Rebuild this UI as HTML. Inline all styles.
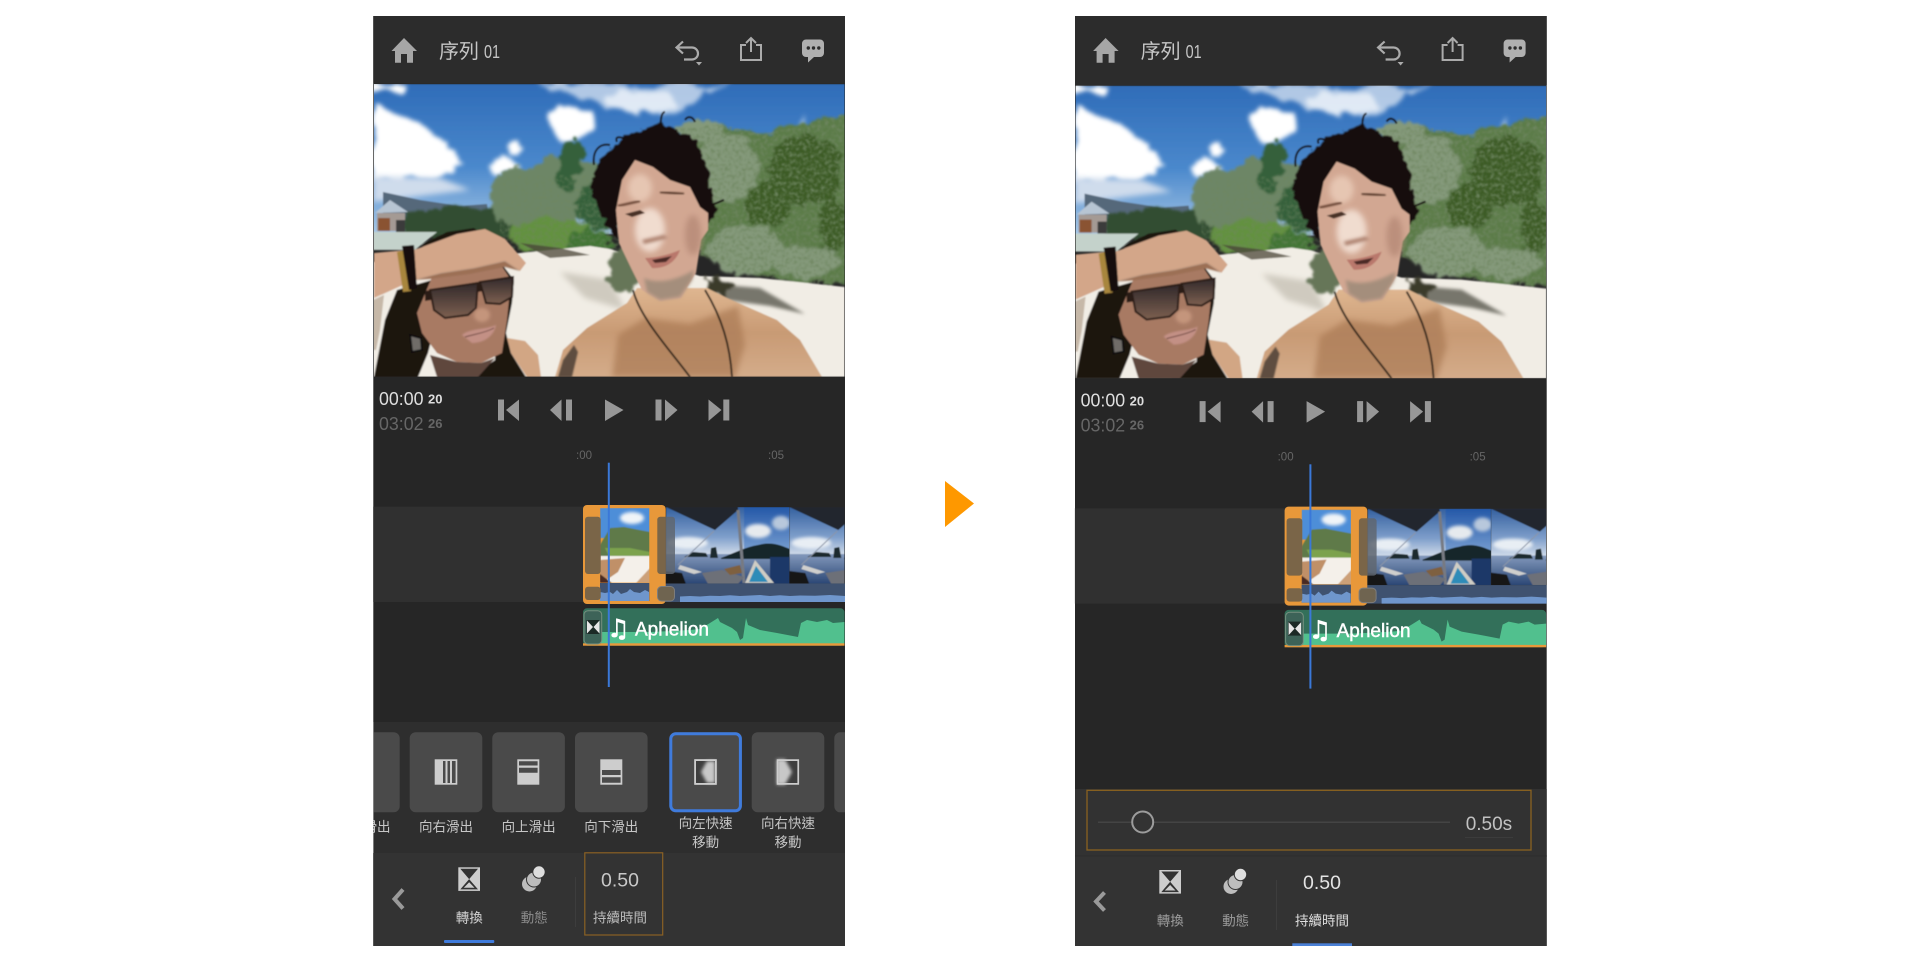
<!DOCTYPE html>
<html lang="zh-Hant"><head><meta charset="utf-8"><title>序列 01</title>
<style>
html,body{margin:0;padding:0;background:#fff;width:1920px;height:963px;overflow:hidden}
svg{display:block}
text{font-family:"Liberation Sans","Noto Sans CJK TC",sans-serif}
.cjk{font-size:13.5px;text-anchor:middle;dominant-baseline:central}
</style></head><body>
<svg width="1920" height="963" viewBox="0 0 1920 963" xmlns="http://www.w3.org/2000/svg">
<defs>
<filter id="b1" x="-5%" y="-5%" width="110%" height="110%"><feGaussianBlur stdDeviation="0.9"/></filter>
<filter id="b3" x="-30%" y="-30%" width="160%" height="160%"><feGaussianBlur stdDeviation="3"/></filter>
<filter id="b2" x="-30%" y="-30%" width="160%" height="160%"><feGaussianBlur stdDeviation="1.600"/></filter>
<filter id="b06" x="-10%" y="-10%" width="120%" height="120%"><feGaussianBlur stdDeviation="0.500"/></filter>
<filter id="cloud" x="-20%" y="-20%" width="140%" height="140%"><feTurbulence type="fractalNoise" baseFrequency=".04" numOctaves="4" seed="3"/><feDisplacementMap in="SourceGraphic" scale="20" xChannelSelector="R" yChannelSelector="G"/><feGaussianBlur stdDeviation="2.200"/></filter>
<filter id="rough" x="-15%" y="-15%" width="130%" height="130%"><feTurbulence type="fractalNoise" baseFrequency=".09" numOctaves="3" seed="8"/><feDisplacementMap in="SourceGraphic" scale="16" xChannelSelector="R" yChannelSelector="G"/><feGaussianBlur stdDeviation="1"/></filter>
<filter id="speck" x="-5%" y="-5%" width="110%" height="110%"><feTurbulence type="fractalNoise" baseFrequency=".28" numOctaves="3" seed="5"/><feColorMatrix type="matrix" values="0 0 0 0 .16  0 0 0 0 .24  0 0 0 0 .12  2.200 0 0 0 -.92"/><feComposite in2="SourceAlpha" operator="in"/></filter>
<filter id="curl" x="-15%" y="-15%" width="130%" height="130%"><feTurbulence type="fractalNoise" baseFrequency=".14" numOctaves="2" seed="2"/><feDisplacementMap in="SourceGraphic" scale="9" xChannelSelector="R" yChannelSelector="G"/><feGaussianBlur stdDeviation=".4"/></filter>
<linearGradient id="sky" x1="0" y1="0" x2="0" y2="1"><stop offset="0" stop-color="#2f6cb8"/><stop offset=".55" stop-color="#4a88cc"/><stop offset="1" stop-color="#a8c8e6"/></linearGradient>
<linearGradient id="skin" x1="0" y1="0" x2="0" y2="1"><stop offset="0" stop-color="#dfb690"/><stop offset=".5" stop-color="#c89a74"/><stop offset="1" stop-color="#d4ac8a"/></linearGradient>
<linearGradient id="lens" x1="0" y1="0" x2="0" y2="1"><stop offset="0" stop-color="#30282a"/><stop offset="1" stop-color="#7d6050"/></linearGradient>
<linearGradient id="tsky" x1="0" y1="0" x2="0" y2="1"><stop offset="0" stop-color="#34609f"/><stop offset=".6" stop-color="#7f9fcb"/><stop offset="1" stop-color="#dce4ee"/></linearGradient>
<linearGradient id="tsky2" x1="0" y1="0" x2="0" y2="1"><stop offset="0" stop-color="#2458a8"/><stop offset="1" stop-color="#7ea4d4"/></linearGradient>
<linearGradient id="twater" x1="0" y1="0" x2="0" y2="1"><stop offset="0" stop-color="#8399bc"/><stop offset="1" stop-color="#2a4674"/></linearGradient>
<clipPath id="cv"><rect x="374" y="84" width="470.5" height="292.7"/></clipPath>
<clipPath id="cth"><rect x="600" y="508" width="49.3" height="74.7"/></clipPath>
<clipPath id="cst"><rect x="665.7" y="507" width="178.8" height="76.5"/></clipPath>
<clipPath id="cth1"><rect x="0" y="0" width="123.3" height="76.5"/></clipPath>

<g id="photo"><g clip-path="url(#cv)"><g filter="url(#b1)">
<rect x="370" y="84" width="480" height="150" fill="url(#sky)"/>
<!-- clouds -->
<g fill="#fff" filter="url(#cloud)">
<path d="M373 105 393 113 417 123 443 143 467 165 450 173 427 180 400 181 373 178Z"/>
<ellipse cx="503" cy="165" rx="14" ry="10"/>
<ellipse cx="572" cy="124" rx="22" ry="17"/>
<ellipse cx="517" cy="148" rx="6" ry="4"/>
<path d="M373 85H403L402 93 385 90 373 88Z"/>
<path d="M536 84H705L697 102 665 114 630 112 600 104 570 94Z" opacity=".62"/>
<ellipse cx="640" cy="100" rx="34" ry="12" opacity=".6"/>
<path d="M700 84H735L715 90Z" opacity=".7"/>
<path d="M795 135 806 114 802 138Z" opacity=".6"/>
</g>
<path d="M373 176 440 178 470 190 373 202Z" fill="#cfdcec" filter="url(#b3)"/>
<!-- far land -->
<path d="M383 192 420 200 460 206 487 204 490 225H383Z" fill="#55687a"/>
<g filter="url(#rough)"><path d="M403 214 440 207 480 208 517 205 520 235 403 238Z" fill="#324e30"/>
<g fill="#6d8666"><ellipse cx="518" cy="198" rx="28" ry="30"/><ellipse cx="555" cy="195" rx="30" ry="40"/><ellipse cx="587" cy="190" rx="22" ry="30"/></g>
<g fill="#36603a"><ellipse cx="572" cy="158" rx="12" ry="18"/><ellipse cx="565" cy="178" rx="10" ry="14"/><ellipse cx="600" cy="205" rx="24" ry="24"/></g>
<ellipse cx="552" cy="236" rx="44" ry="17" fill="#64913f"/>
<ellipse cx="590" cy="242" rx="22" ry="13" fill="#437434"/>
</g>
<!-- right trees -->
<g filter="url(#rough)">
<path d="M680 128 720 124 760 134 800 126 850 112V285L800 283 740 272 700 255Z" fill="#5c7c48"/>
<g fill="#84997a"><ellipse cx="725" cy="168" rx="34" ry="34"/><ellipse cx="745" cy="250" rx="38" ry="24"/><ellipse cx="805" cy="262" rx="32" ry="16"/><ellipse cx="700" cy="130" rx="24" ry="10"/></g>
<g fill="#3c5c26"><ellipse cx="805" cy="170" rx="38" ry="36"/><ellipse cx="770" cy="205" rx="24" ry="22"/><ellipse cx="833" cy="225" rx="14" ry="28"/></g>
</g>
<path d="M680 128 720 124 760 134 800 126 850 112V285L800 283 740 272 700 255Z" fill="#000" filter="url(#speck)"/>
<path d="M500 175H620V250H500Z" fill="#000" filter="url(#speck)" opacity=".6"/>
<!-- sand -->
<path d="M373 262 500 255 590 246 610 249 640 258 700 276 760 278 845 287V377H373Z" fill="#f1ede5"/>
<path d="M712 284 760 288 805 314 770 306 725 300Z" fill="#77766c" filter="url(#b2)"/>
<path d="M560 272 610 280 625 310 585 298Z" fill="#cfcabf" filter="url(#b3)"/>
<g filter="url(#rough)"><ellipse cx="625" cy="270" rx="17" ry="22" fill="#667658"/><path d="M706 277 735 284 726 296 706 292Z" fill="#3a3a2c"/></g>
<path d="M520 243 560 248 590 255 550 258Z" fill="#4a4438" opacity=".75"/>
<!-- left beach bits -->
<path d="M375 213 408 212 390 200Z" fill="#b7c5d3"/>
<rect x="377" y="213" width="28" height="18" fill="#a49a94"/>
<rect x="378" y="218" width="12" height="13" fill="#8a5230"/>
<rect x="396" y="220" width="9" height="12" fill="#3a3a3a"/>
<path d="M373 232 437 232 415 250 373 250Z" fill="#c4d2cb"/>
<!-- man body -->
<path d="M555 377 563 350 587 328 627 303 637 288 707 288 727 298 777 320 800 340 822 377Z" fill="url(#skin)"/>
<path d="M612 377 618 335 645 318 690 324 738 306 745 345 735 377Z" fill="#aa7a54" opacity=".7" filter="url(#b3)"/>
<path d="M558 377 563 360 574 345 578 352 572 377Z" fill="#5f4e40" filter="url(#b06)"/>
<!-- necklace -->
<path d="M633 290C640 318 670 350 690 377" stroke="#1c1510" stroke-width="1.800" fill="none"/>
<path d="M705 290C722 318 730 345 732 377" stroke="#1c1510" stroke-width="1.800" fill="none"/>
<!-- hair -->
<g filter="url(#curl)" fill="#16110e" stroke="#16110e" stroke-width="9">
<path d="M593 190 603 163 627 140 660 127 693 143 703 170 707 197 712 210 707 218 700 220 690 190 670 180 640 170 625 190 615 212 613 225 603 207 595 187Z"/>
</g>
<g stroke="#16110e" stroke-width="2" fill="none">
<path d="M594 165C592 150 600 143 610 145M617 142C614 135 622 137 626 140M661 130C660 118 662 112 665 112M708 205C715 205 720 201 724 200M685 120C688 115 693 117 695 122"/>
</g>
<!-- head -->
<path d="M616 210 622 180 635 160 653 167 670 180 690 187 700 207 708 213 708 230 701 240 696 273 681 298 660 301 642 290 632 270 619 243Z" fill="#d2a792"/>
<ellipse cx="650" cy="230" rx="15" ry="22" fill="#f0dccf" filter="url(#b3)"/>
<ellipse cx="640" cy="188" rx="12" ry="14" fill="#e6c6b2" filter="url(#b3)"/>
<ellipse cx="693" cy="235" rx="8" ry="20" fill="#bb8f7c" filter="url(#b3)"/>
<path d="M644 278C654 283 672 283 694 270L692 280 680 297 660 300 647 292Z" fill="#a48e7c" filter="url(#b2)"/>
<path d="M618 206 640 201" stroke="#6e4838" stroke-width="2.500" filter="url(#b06)"/>
<path d="M660 192 684 194" stroke="#5a3a2c" stroke-width="2.500" filter="url(#b06)"/>
<path d="M625 214 640 210 645 213 632 217Z" fill="#4a3228"/>
<path d="M663 203 682 203" stroke="#4a3228" stroke-width="2.500" filter="url(#b06)"/>
<path d="M642 240 664 235 668 238 644 244Z" fill="#a87a68" filter="url(#b2)"/>
<path d="M645 258C655 258 668 255 680 250 676 262 665 269 652 268Z" fill="#b9786c"/>
<path d="M652 260 672 256 666 262 655 263Z" fill="#4c2a26"/>
<!-- woman -->
<g fill="#1b1310">
<path d="M374 377 385 320 397 290 432 280 447 300 432 337 428 353 418 377Z"/>
<path d="M501 263 514 280 512 303 506 333 511 353 526 377H470L495 360Z"/>
<path d="M421 245 447 232 474 228 490 240 440 255Z"/>
</g>
<path d="M417 313 432 277 501 265 511 280 507 320 502 353 481 363 457 362 437 353 422 333Z" fill="#a87a64"/>
<path d="M430 355 457 362 481 363 495 358 478 377H437Z" fill="#5f463e"/>
<path d="M507 338 525 341 538 355 541 377H527L511 353Z" fill="#d2a684"/>
<path d="M425 291 513 276 513 286 425 301Z" fill="#2a1c18"/>
<path d="M430 290 478 283 476 308 468 315 445 318 434 310Z" fill="url(#lens)" stroke="#2a1c18" stroke-width="2"/>
<path d="M480 282 513 277 512 297 500 304 486 303Z" fill="url(#lens)" stroke="#2a1c18" stroke-width="2"/>
<ellipse cx="482" cy="315" rx="8" ry="7" fill="#c4957c" filter="url(#b2)"/>
<path d="M462 335C470 328 485 330 496 325 494 336 484 343 472 343Z" fill="#c39085" filter="url(#b06)"/>
<path d="M465 337C475 334 485 333 494 328" stroke="#6d4640" stroke-width="1" fill="none"/>
<path d="M410 335 421 338 422 350 412 352Z" fill="#6f6c68" stroke="#111" stroke-width="2"/>
<path d="M374 253 407 250 414 250 457 234 485 229 505 239 526 263 520 271 505 261 474 268 441 273 414 280 374 298Z" fill="#d3a689"/>
<path d="M414 280 441 273 474 268 505 261 520 271 505 267 470 274 430 279Z" fill="#9c7054" filter="url(#b06)"/>
<path d="M397 252 405 250 411 291 403 292Z" fill="#a8863e"/>
<path d="M402 246 414 245 417 288 409 290Z" fill="#14100e"/>
<path d="M373 300 384 295 380 330 376 350 373 350Z" fill="#c6b8a8"/>
</g></g></g>

<g id="thumb">
<g clip-path="url(#cth1)" filter="url(#b06)">
<rect width="124" height="50" fill="url(#tsky)"/>
<ellipse cx="22" cy="36" rx="20" ry="6" fill="#e8eef4" filter="url(#b2)"/>
<rect x="78" y="0" width="46" height="48" fill="url(#tsky2)"/>
<ellipse cx="92" cy="24" rx="13" ry="7" fill="#e6eaee" filter="url(#b2)"/>
<ellipse cx="115" cy="16" rx="9" ry="7" fill="#b8c8dc" filter="url(#b2)"/>
<rect y="47" width="124" height="30" fill="url(#twater)"/>
<path d="M55 51C68 46 80 40 92 38 106 34 116 39 124 42V52H55Z" fill="#18262a"/>
<path d="M44 51 45 41 50 40 52 51Z M18 50 27 45 40 46 42 50Z" fill="#1e2a2e"/>
<path d="M104 50H124V77H104Z" fill="#1f3868"/>
<path d="M0 0H72V3L49 23Z" fill="#24262e"/>
<path d="M48 24 12 58" stroke="#8c96a8" stroke-width="1"/>
<path d="M72 3 78 76" stroke="#777a82" stroke-width="3"/>
<path d="M0 64 16 66 20 77H0Z" fill="#121214"/>
<path d="M14 58 36 65 28 67 12 62Z" fill="#cfcfcd"/>
<path d="M36 66 56 63 78 70 72 77H42Z" fill="#6d6f78"/>
<path d="M58 62 74 58 76 66 64 68Z" fill="#7e6040"/>
<path d="M79 76 89 53 108 76Z" fill="#cfcdc4"/>
<path d="M83 75 90 59 102 75Z" fill="#2f8cb8"/>
</g></g>

<g id="strip">
<rect x="373.300" y="506.700" width="212" height="95.300" fill="#303030"/>
<g clip-path="url(#cst)"><use href="#thumb" x="666" y="507"/><use href="#thumb" x="789.300" y="507"/></g>
<rect x="665" y="583.500" width="180" height="18.500" fill="#3f5270"/>
<path d="M680 602V596.500L690 596 700 596.500 710 595.800 720 596 730 595.200 740 596 750 595.500 760 595 770 596 780 595.300 790 596 800 595.500 815 595.800 830 595 845 596V602Z" fill="#6f96cc"/>
<rect x="583" y="505" width="82.700" height="99" rx="4" fill="#e8983a"/>
<g clip-path="url(#cth)" filter="url(#b06)">
<rect x="600" y="508" width="50" height="30" fill="#4e8ed8"/>
<ellipse cx="632" cy="518" rx="12" ry="6" fill="#f0f4f8" filter="url(#b2)"/>
<path d="M600 545 610 528 624 527 650 532V553L620 558 600 556Z" fill="#5f7a4a"/>
<path d="M605 548 630 548 650 552V558L610 558Z" fill="#7ba24e"/>
<path d="M600 556H650V583H600Z" fill="#f4f0ea"/>
<path d="M600 560 625 558 618 572 602 583H600Z" fill="#c09068"/>
<path d="M636 583 650 568V583Z" fill="#cca078"/>
<path d="M600 574 612 583H600Z" fill="#4a2a20"/>
</g>
<rect x="600" y="583" width="49.300" height="18" fill="#3f5270"/>
<path d="M600 601V592L605 593 610 592 613 594 617 590 621 594 627 592 630 589 634 592 640 593 645 590 649 592V601Z" fill="#6f96cc"/>
<rect x="585" y="516.700" width="15.700" height="57.300" rx="3" fill="#7a6548"/>
<rect x="585" y="586.700" width="15.700" height="13.300" rx="3" fill="#7a6548"/>
<path d="M665.700 516.700H660A3 3 0 0 0 657.300 520V571A3 3 0 0 0 660 574H665.700Z" fill="#7a6548"/>
<path d="M665.700 516.700H672A3 3 0 0 1 675 520V571A3 3 0 0 1 672 574H665.700Z" fill="#5f6670" opacity=".85"/>
<rect x="657.500" y="586.500" width="17" height="14.500" rx="4" fill="#6f6450" stroke="#7d7d7d"/>
<!-- audio -->
<rect x="583" y="608.300" width="261.500" height="37.400" rx="4" fill="#33705a"/>
<path d="M601 644V632L630 632 650 632 672 631 690 630 700 629 710 623 718 618 720 622 732 628 737 632 740 640 743 638 746 618 748 625 760 630 777 633 798 637 801 623 807 620 817 622 827 620 833 623 844.500 622V644Z" fill="#51c08e"/>
<rect x="583" y="643.300" width="261.500" height="2.400" fill="#e8983a"/>
<rect x="584" y="610.700" width="17.700" height="33.300" rx="4" fill="#3d6358" stroke="#76907f"/>
<rect x="586.500" y="620" width="13" height="14" fill="#1c2a26"/>
<path d="M587 620.500 593 627 587 633.500ZM599.500 620.500 593.500 627 599.500 633.500Z" fill="#e6e6e6"/>
<text x="618.500" y="637" font-size="25" fill="#fff" stroke="#fff" stroke-width=".7" text-anchor="middle" style="font-family:'DejaVu Sans',sans-serif">♫</text>
<rect x="607.800" y="462.700" width="2" height="224.300" fill="#3a78d8"/>
</g>

<g id="top">
<path d="M404 38 417 51H413V62.700H407V54H401V62.700H395V51H391.500Z" fill="#a6a6a6"/>
<path d="M677 47.500H692A6 6 0 0 1 692 59.500H684M683 41.500 676.500 47.500 683 53.500" stroke="#ababab" stroke-width="2.200" fill="none"/>
<path d="M696 62H702L699 65.500Z" fill="#ababab"/>
<path d="M746 45H741V60H761V45H756M751 52V38.500M746 43 751 38 756 43" stroke="#ababab" stroke-width="2" fill="none"/>
<path d="M806 39.500H820A4 4 0 0 1 824 43.500V53A4 4 0 0 1 820 57H814L808 62.500V57H806A4 4 0 0 1 802 53V43.500A4 4 0 0 1 806 39.500Z" fill="#b0b0b0"/>
<g fill="#2c2c2c"><circle cx="808.300" cy="48" r="1.700"/><circle cx="813.500" cy="48" r="1.700"/><circle cx="818.800" cy="48" r="1.700"/></g>
</g>

<g id="transport" fill="#979797">
<rect x="498" y="399.500" width="6" height="21"/><path d="M519 399.500 506 410 519 421Z"/>
<path d="M561.500 399.500 550 410 561.500 421Z"/><rect x="566" y="399.500" width="6" height="21"/>
<path d="M605 399.500 623.500 410 605 421Z"/>
<rect x="655.500" y="399.500" width="6" height="21"/><path d="M665 399.500 677.500 410 665 421Z"/>
<path d="M708.500 399.500 721.500 410 708.500 421Z"/><rect x="723.300" y="399.500" width="6" height="21"/>
</g>

<g id="xicon"><rect width="21.700" height="23.600" fill="#cdcdcd"/><path d="M2 1.500H19.700L10.850 11.800ZM2 22.100H19.700L10.850 11.800Z" fill="#333"/><path d="M5.500 20.500 10.850 15 16.200 20.500Z" fill="#cdcdcd"/></g>
<g id="micon"><circle cx="7.500" cy="18" r="7.500" fill="#bdbdbd"/><circle cx="12" cy="13.500" r="7.500" fill="#bdbdbd" stroke="#333" stroke-width="1"/><circle cx="17" cy="6" r="6.200" fill="#dedede" stroke="#333" stroke-width="1"/></g>
</defs>

<rect width="1920" height="963" fill="#fff"/>

<!-- LEFT PANEL -->
<rect x="373.300" y="16" width="471.700" height="930" fill="#262626"/>
<rect x="373.300" y="16" width="471.700" height="67.700" fill="#2c2c2c"/>
<use href="#photo"/>
<use href="#top"/>
<use href="#transport"/>
<use href="#strip"/>
<text x="439" y="58" font-size="20" fill="#c6c6c6">序列</text>
<text x="484" y="58" font-size="18" fill="#c6c6c6" textLength="16" lengthAdjust="spacingAndGlyphs">01</text>
<text x="379" y="405" font-size="18.500" fill="#dedede" textLength="44.500" lengthAdjust="spacingAndGlyphs">00:00</text>
<text x="428" y="403.700" font-size="13" font-weight="bold" fill="#dedede">20</text>
<text x="379" y="430" font-size="18.500" fill="#666" textLength="44.500" lengthAdjust="spacingAndGlyphs">03:02</text>
<text x="428" y="428" font-size="13" font-weight="bold" fill="#666">26</text>
<text x="576" y="459" font-size="11.500" fill="#666">:00</text>
<text x="768" y="459" font-size="11.500" fill="#666">:05</text>
<text x="635" y="635.500" font-size="19" fill="#fff" stroke="#fff" stroke-width=".45">Aphelion</text>

<rect x="373.300" y="722" width="471.700" height="131" fill="#2e2e2e"/>
<rect x="373.300" y="853" width="471.700" height="93" fill="#333"/>
<g fill="#4a4a4a">
<rect x="360" y="732.300" width="39.700" height="80" rx="6"/>
<rect x="409.700" y="732.300" width="72.600" height="80" rx="6"/>
<rect x="492.300" y="732.300" width="72.600" height="80" rx="6"/>
<rect x="575" y="732.300" width="72.600" height="80" rx="6"/>
<rect x="669.300" y="732.300" width="72.600" height="80" rx="6"/>
<rect x="751.700" y="732.300" width="72.600" height="80" rx="6"/>
<path d="M845 732.300H840A6 6 0 0 0 834.300 738.300V806.300A6 6 0 0 0 840 812.300H845Z"/>
</g>
<rect x="670.800" y="733.800" width="69.600" height="77" rx="5" fill="none" stroke="#3f7bdc" stroke-width="3"/>
<!-- tile icons -->
<rect x="434.700" y="759.300" width="22.600" height="25.400" fill="#cdcdcd"/>
<path d="M443 761H445.500V783H443ZM447.500 761H450V783H447.500ZM452 761H455.600V783H452Z" fill="#4a4a4a"/>
<rect x="517.300" y="759.300" width="22" height="25.400" fill="#cdcdcd"/>
<path d="M519 761.300H537.600V765.500H519ZM519 767.700H537.600V772.700H519Z" fill="#4a4a4a"/>
<rect x="600.300" y="759.300" width="22" height="25.400" fill="#cdcdcd"/>
<path d="M602 770H620.600V775H602ZM602 777.300H620.600V782.800H602Z" fill="#4a4a4a"/>
<rect x="694.300" y="759.300" width="22.400" height="25.400" fill="#cdcdcd"/>
<rect x="696" y="761" width="19" height="22" fill="#3e3e3e"/>
<path d="M715 761H707L701 772 707 783H715Z" fill="#c8c8c8" filter="url(#b2)"/>
<path d="M694.300 759.300H716.700V784.700H694.300ZM696 761V783H715V761Z" fill="#cdcdcd" fill-rule="evenodd"/>
<rect x="776.700" y="759.300" width="22.400" height="25.400" fill="#3e3e3e"/>
<path d="M776.700 759.300H785L792 772 785 784.700H776.700Z" fill="#c8c8c8" filter="url(#b2)"/>
<path d="M776.700 759.300H799.100V784.700H776.700ZM778.400 761V783H797.400V761Z" fill="#cdcdcd" fill-rule="evenodd"/>
<g fill="#c6c6c6">
<text class="cjk" x="363.500" y="827">向左滑出</text>
<text class="cjk" x="446" y="827">向右滑出</text>
<text class="cjk" x="528.600" y="827">向上滑出</text>
<text class="cjk" x="611.300" y="827">向下滑出</text>
<text class="cjk" x="705.600" y="823.300">向左快速</text>
<text class="cjk" x="705.600" y="842.700">移動</text>
<text class="cjk" x="788" y="823.300">向右快速</text>
<text class="cjk" x="788" y="842.700">移動</text>
</g>
<rect x="320" y="722" width="53.300" height="131" fill="#fff"/>
<rect x="584.800" y="852.800" width="77.900" height="82.200" fill="none" stroke="#8a6124" stroke-width="1.200"/>
<path d="M403 889.500 394.500 899 403 908.500" fill="none" stroke="#9a9a9a" stroke-width="4"/>
<use href="#xicon" x="458.300" y="867.300"/>
<use href="#micon" x="522" y="866"/>
<text class="cjk" x="469.300" y="918" fill="#d4d4d4">轉換</text>
<text class="cjk" x="534.300" y="918" fill="#8c8c8c">動態</text>
<rect x="575" y="877" width="1" height="50" fill="#3d3d3d"/>
<text x="620" y="886.300" font-size="19.500" fill="#c8c8c8" text-anchor="middle">0.50</text>
<text class="cjk" x="620" y="918" fill="#bcbcbc">持續時間</text>
<rect x="444" y="940" width="50.300" height="3" rx="1" fill="#3f7bdc"/>

<!-- ARROW -->
<path d="M945 481 974 503.500 945 527Z" fill="#fe9800"/>

<!-- RIGHT PANEL -->
<rect x="1075" y="16" width="471.700" height="930" fill="#262626"/>
<rect x="1075" y="16" width="471.700" height="69" fill="#2c2c2c"/>
<g transform="translate(701.600 1.600)"><use href="#photo"/><use href="#transport"/><use href="#strip"/></g>
<g transform="translate(701.600 0)">
<use href="#top"/>
<text x="439" y="58" font-size="20" fill="#c6c6c6">序列</text>
<text x="484" y="58" font-size="18" fill="#c6c6c6" textLength="16" lengthAdjust="spacingAndGlyphs">01</text>
</g>
<g transform="translate(701.600 1.600)">
<text x="379" y="405" font-size="18.500" fill="#dedede" textLength="44.500" lengthAdjust="spacingAndGlyphs">00:00</text>
<text x="428" y="403.700" font-size="13" font-weight="bold" fill="#dedede">20</text>
<text x="379" y="430" font-size="18.500" fill="#666" textLength="44.500" lengthAdjust="spacingAndGlyphs">03:02</text>
<text x="428" y="428" font-size="13" font-weight="bold" fill="#666">26</text>
<text x="576" y="459" font-size="11.500" fill="#666">:00</text>
<text x="768" y="459" font-size="11.500" fill="#666">:05</text>
<text x="635" y="635.500" font-size="19" fill="#fff" stroke="#fff" stroke-width=".45">Aphelion</text>
</g>
<rect x="1075" y="789" width="471.700" height="67" fill="#323232"/>
<rect x="1075" y="856" width="471.700" height="90" fill="#333"/>
<rect x="1075" y="855.500" width="471.700" height="1" fill="#2c2c2c"/>
<rect x="1087" y="790.300" width="444" height="59.700" fill="none" stroke="#8a6220" stroke-width="1.300"/>
<rect x="1098" y="821.500" width="352" height="1.500" fill="#444"/>
<circle cx="1142.700" cy="822" r="10.500" fill="#333" stroke="#9c9c9c" stroke-width="2"/>
<text x="1465.700" y="830" font-size="19" fill="#c2c2c2">0.50s</text>
<rect x="1465" y="837" width="48" height="1" fill="#3c3c3c"/>
<path d="M1104.500 892.500 1096 901.500 1104.500 910.500" fill="none" stroke="#9a9a9a" stroke-width="4"/>
<use href="#xicon" x="1159.300" y="870"/>
<use href="#micon" x="1223.500" y="868.500"/>
<text class="cjk" x="1170.300" y="921" fill="#9c9c9c">轉換</text>
<text class="cjk" x="1235.700" y="921" fill="#9c9c9c">動態</text>
<rect x="1276" y="880" width="1" height="50" fill="#3d3d3d"/>
<text x="1322" y="889" font-size="19.500" fill="#e4e4e4" text-anchor="middle">0.50</text>
<text class="cjk" x="1322" y="921" fill="#dedede">持續時間</text>
<rect x="1292.300" y="943.300" width="59.700" height="2.700" fill="#4a80d6"/>
</svg>
</body></html>
